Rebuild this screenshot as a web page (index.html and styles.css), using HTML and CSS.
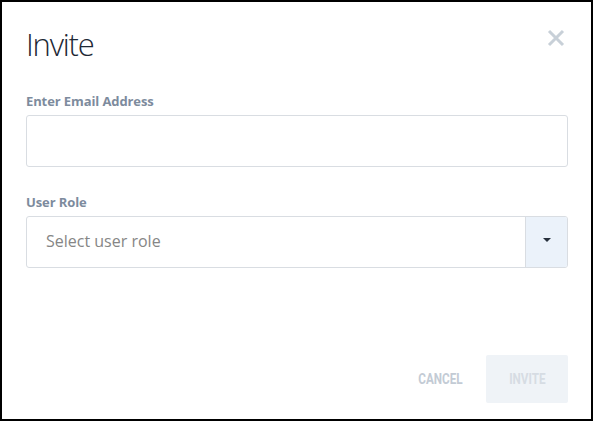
FILE: index.html
```html
<!DOCTYPE html>
<html>
<head>
<meta charset="utf-8">
<link rel="stylesheet" href="styles.css">
</head>
<body>
<div class="modal">
  <div class="header">
    <h1 class="title">Invite</h1>
    <button class="close" aria-label="Close">
      <svg width="18" height="18" viewBox="0 0 18 18"><path d="M2 2 L16 16 M16 2 L2 16" stroke="#c8d0d8" stroke-width="3" stroke-linecap="butt"/></svg>
    </button>
  </div>
  <div class="field">
    <label class="label">Enter Email Address</label>
    <div class="input"></div>
  </div>
  <div class="field">
    <label class="label">User Role</label>
    <div class="select">
      <span class="placeholder">Select user role</span>
      <span class="select-btn"><span class="caret"></span></span>
    </div>
  </div>
  <div class="footer">
    <button class="btn-cancel"><span>CANCEL</span></button>
    <button class="btn-invite"><span>INVITE</span></button>
  </div>
</div>
</body>
</html>
```
FILE: styles.css
```css
html, body { margin: 0; padding: 0; background: #fff; }
.modal {
  box-sizing: border-box;
  width: 593px;
  height: 421px;
  border: 2px solid #000;
  padding: 0 23px 0 24px;
  display: flex;
  flex-direction: column;
  font-family: "Open Sans", sans-serif;
}
.header {
  display: flex;
  justify-content: space-between;
  align-items: flex-start;
  padding-top: 22px;
  height: 64px;
  box-sizing: border-box;
}
.title {
  margin: 0;
  font-family: "Open Sans", sans-serif;
  font-weight: 300;
  font-size: 31px;
  line-height: 40px;
  letter-spacing: -1.2px;
  color: #1e2835;
}
.close {
  border: 0;
  background: none;
  padding: 0;
  margin: 5px 3px 0 0;
  width: 18px;
  height: 18px;
  display: block;
}
.close svg { display: block; }
.field { display: flex; flex-direction: column; margin-top: 26px; }
.field + .field { margin-top: 26px; }
.label {
  font-weight: 700;
  font-size: 13px;
  line-height: 18px;
  letter-spacing: -0.1px;
  color: #7d8b9d;
  margin-bottom: 5px;
}
.input, .select {
  box-sizing: border-box;
  height: 52px;
  border: 1px solid #d9dde2;
  border-radius: 3px;
  background: #fff;
}
.select { display: flex; align-items: stretch; }
.placeholder {
  flex: 1;
  display: flex;
  align-items: center;
  padding-left: 19px;
  padding-bottom: 2px;
  font-size: 16px;
  color: #868686;
}
.select-btn {
  width: 41px;
  background: #ebf2fa;
  border-left: 1px solid #d9dde2;
  border-radius: 0 2px 2px 0;
  display: flex;
  align-items: center;
  justify-content: center;
}
.caret {
  width: 0; height: 0;
  border-left: 4px solid transparent;
  border-right: 4px solid transparent;
  border-top: 4px solid #27303c;
  margin-top: -4px;
}
.footer {
  margin-top: auto;
  padding-bottom: 16px;
  display: flex;
  justify-content: flex-end;
  align-items: center;
}
.footer button {
  border: 0;
  font-family: "Roboto", sans-serif;
  font-weight: 700;
  font-size: 15px;
  padding: 0;
  height: 48px;
  display: flex;
  align-items: center;
  justify-content: center;
}
.footer button span { display: inline-block; transform: scaleX(0.78); letter-spacing: 0; }
.btn-cancel {
  background: none;
  color: #c3cbd5;
  width: 62px;
  margin-right: 15px;
}
.btn-invite {
  background: #eff3f7;
  color: #d6dce3;
  width: 82px;
  border-radius: 2px;
}
```
